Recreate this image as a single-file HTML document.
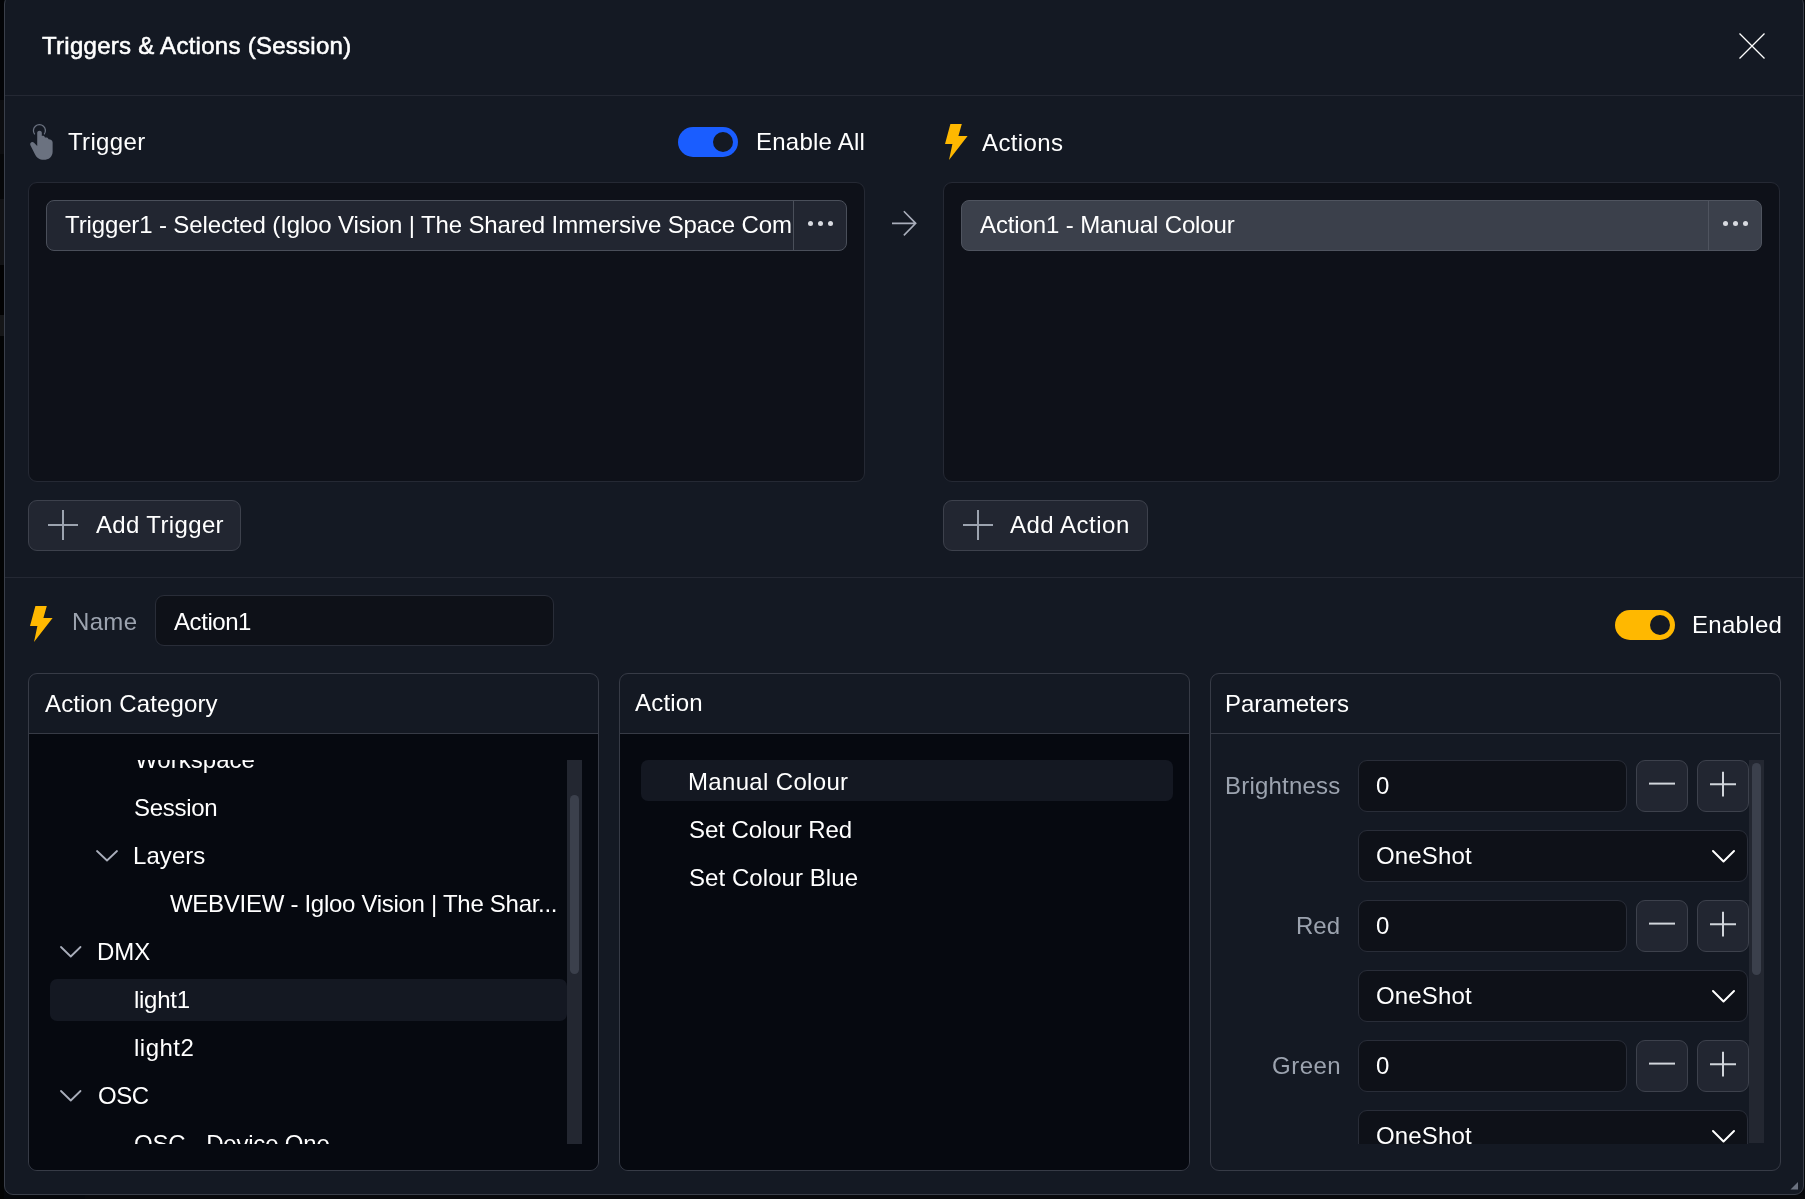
<!DOCTYPE html>
<html><head><meta charset="utf-8">
<style>
html,body{margin:0;padding:0;width:1805px;height:1199px;overflow:hidden;background:#05070b;}
*{box-sizing:border-box;}
body{font-family:"Liberation Sans",sans-serif;font-size:24px;color:#fff;position:relative;}
.abs{position:absolute;}
.t{position:absolute;line-height:28px;white-space:nowrap;will-change:transform;}
</style></head>
<body>
<div class="abs" style="left:0px;top:0px;width:4px;height:100px;background:#030407;"></div>
<div class="abs" style="left:0px;top:100px;width:4px;height:54px;background:#0c0d10;"></div>
<div class="abs" style="left:0px;top:154px;width:4px;height:45px;background:#060709;"></div>
<div class="abs" style="left:0px;top:199px;width:4px;height:66px;background:#111215;"></div>
<div class="abs" style="left:0px;top:265px;width:4px;height:50px;background:#020203;"></div>
<div class="abs" style="left:0px;top:315px;width:4px;height:21px;background:#151618;"></div>
<div class="abs" style="left:0px;top:336px;width:4px;height:863px;background:#030405;"></div>
<div class="abs" style="left:85px;top:1195px;width:1720px;height:4px;background:#08090c;"></div>
<div class="abs" style="left:4px;top:-5px;width:1800px;height:1200px;background:#141923;border:1px solid #3a3f4a;border-radius:9px"></div>
<div class="t" style="left:42px;top:32px;letter-spacing:0.27px;color:#fff;-webkit-text-stroke:0.55px #fff;">Triggers &amp; Actions (Session)</div>
<svg class="abs" style="left:1732px;top:26px" width="40" height="40" viewBox="0 0 40 40"><path d="M7.5 7.5 L32.5 32.5 M32.5 7.5 L7.5 32.5" stroke="#fff" stroke-width="1.25" fill="none"/></svg>
<div class="abs" style="left:5px;top:95px;width:1798px;height:1px;background:#242833;"></div>
<svg class="abs" style="left:24px;top:118px" width="36" height="48" viewBox="0 0 899 1199">
 <path d="M267 407 A150 150 0 1 1 503 407" stroke="#6b7280" stroke-width="32" fill="none"/>
 <path d="M330 700 L330 370 C330 300 445 300 445 370 L445 450 C475 440 510 450 520 483 L527 490 C555 480 598 488 610 522 L617 530 C650 528 715 545 715 610 L715 840 C715 960 620 1045 490 1045 C390 1045 310 990 270 900 L160 680 C130 620 210 570 250 620 L330 700 Z" fill="#6b7280"/>
</svg>
<div class="t" style="left:68px;top:128px;letter-spacing:0.333px;color:#fff;">Trigger</div>
<div class="abs" style="left:678px;top:127px;width:60px;height:30px;background:#1a5dff;border-radius:15px"></div>
<div class="abs" style="left:713px;top:132px;width:20px;height:20px;background:#141923;border-radius:50%"></div>
<div class="t" style="left:756px;top:128px;letter-spacing:0.233px;color:#fff;">Enable All</div>
<svg class="abs" style="left:945px;top:124px" width="23" height="36" viewBox="0 0 23 36"><path d="M5.4 0 L16.8 0 L13.4 12 L22.6 12 L4 36 L7.4 20 L0 20 Z" fill="#ffb800"/></svg>
<div class="t" style="left:982px;top:129px;letter-spacing:0.383px;color:#fff;">Actions</div>
<div class="abs" style="left:28px;top:182px;width:837px;height:300px;background:#0e1119;border:1px solid #252934;border-radius:9px"></div>
<div class="abs" style="left:46px;top:200px;width:801px;height:51px;background:#222631;border:1px solid #4a4f5a;border-radius:8px;overflow:hidden">
<div class="abs" style="left:0;top:0;width:746px;height:49px;overflow:hidden"><div class="t" style="left:18px;top:10px;letter-spacing:-0.13px;color:#fff;">Trigger1 - Selected (Igloo Vision | The Shared Immersive Space Company)</div>
</div>
<div class="abs" style="left:746px;top:0px;width:1px;height:49px;background:#4a4f5a;"></div>
<div class="abs" style="left:760.5px;top:19.5px;width:5px;height:5px;background:#d8dae0;border-radius:50%"></div>
<div class="abs" style="left:770.7px;top:19.5px;width:5px;height:5px;background:#d8dae0;border-radius:50%"></div>
<div class="abs" style="left:780.9px;top:19.5px;width:5px;height:5px;background:#d8dae0;border-radius:50%"></div>
</div>
<svg class="abs" style="left:884px;top:203px" width="40" height="40" viewBox="0 0 40 40"><path d="M8 20.35 L31.7 20.35 M19.85 8.3 L31.7 20.35 L19.85 32.4" stroke="#a9aebb" stroke-width="1.6" fill="none"/></svg>
<div class="abs" style="left:943px;top:182px;width:837px;height:300px;background:#0e1119;border:1px solid #252934;border-radius:9px"></div>
<div class="abs" style="left:961px;top:200px;width:801px;height:51px;background:#3b404b;border:1px solid #4f545f;border-radius:8px;overflow:hidden">
<div class="t" style="left:18px;top:10px;letter-spacing:-0.123px;color:#fff;">Action1 - Manual Colour</div>
<div class="abs" style="left:746px;top:0px;width:1px;height:49px;background:#4f545f;"></div>
<div class="abs" style="left:760.5px;top:19.5px;width:5px;height:5px;background:#d8dae0;border-radius:50%"></div>
<div class="abs" style="left:770.7px;top:19.5px;width:5px;height:5px;background:#d8dae0;border-radius:50%"></div>
<div class="abs" style="left:780.9px;top:19.5px;width:5px;height:5px;background:#d8dae0;border-radius:50%"></div>
</div>
<div class="abs" style="left:28px;top:500px;width:213px;height:51px;background:#222631;border:1px solid #3d414c;border-radius:9px"></div>
<svg class="abs" style="left:48px;top:510px" width="30" height="30" viewBox="0 0 30 30"><path d="M15.0 0 V30 M0 15.0 H30" stroke="#9ca3af" stroke-width="2" fill="none"/></svg>
<div class="t" style="left:96px;top:511px;letter-spacing:0.35px;color:#fff;">Add Trigger</div>
<div class="abs" style="left:943px;top:500px;width:205px;height:51px;background:#222631;border:1px solid #3d414c;border-radius:9px"></div>
<svg class="abs" style="left:963px;top:510px" width="30" height="30" viewBox="0 0 30 30"><path d="M15.0 0 V30 M0 15.0 H30" stroke="#9ca3af" stroke-width="2" fill="none"/></svg>
<div class="t" style="left:1010px;top:511px;letter-spacing:0.5px;color:#fff;">Add Action</div>
<div class="abs" style="left:5px;top:577px;width:1798px;height:1px;background:#242833;"></div>
<svg class="abs" style="left:30px;top:606px" width="23" height="36" viewBox="0 0 23 36"><path d="M5.4 0 L16.8 0 L13.4 12 L22.6 12 L4 36 L7.4 20 L0 20 Z" fill="#ffb800"/></svg>
<div class="t" style="left:72px;top:608px;letter-spacing:0.333px;color:#9ca3af;">Name</div>
<div class="abs" style="left:155px;top:595px;width:399px;height:51px;background:#0e1118;border:1px solid #292d38;border-radius:9px"></div>
<div class="t" style="left:174px;top:608px;letter-spacing:-0.433px;color:#fff;">Action1</div>
<div class="abs" style="left:1615px;top:610px;width:60px;height:30px;background:#ffb800;border-radius:15px"></div>
<div class="abs" style="left:1650px;top:615px;width:20px;height:20px;background:#141923;border-radius:50%"></div>
<div class="t" style="left:1692px;top:611px;letter-spacing:0.3px;color:#fff;">Enabled</div>
<div class="abs" style="left:28px;top:673px;width:571px;height:498px;background:#141923;border:1px solid #373b46;border-radius:9px;overflow:hidden">
<div class="abs" style="left:0px;top:59px;width:569px;height:1px;background:#373b46;"></div>
<div class="abs" style="left:0px;top:60px;width:569px;height:437px;background:#060910;"></div>
</div>
<div class="t" style="left:45px;top:690px;letter-spacing:0.129px;color:#fff;">Action Category</div>
<div class="abs" style="left:619px;top:673px;width:571px;height:498px;background:#141923;border:1px solid #373b46;border-radius:9px;overflow:hidden">
<div class="abs" style="left:0px;top:59px;width:569px;height:1px;background:#373b46;"></div>
<div class="abs" style="left:0px;top:60px;width:569px;height:437px;background:#060910;"></div>
</div>
<div class="t" style="left:635px;top:689px;letter-spacing:0.2px;color:#fff;">Action</div>
<div class="abs" style="left:1210px;top:673px;width:571px;height:498px;background:#141923;border:1px solid #373b46;border-radius:9px;overflow:hidden">
<div class="abs" style="left:0px;top:59px;width:569px;height:1px;background:#373b46;"></div>
</div>
<div class="t" style="left:1225px;top:690px;letter-spacing:0.0px;color:#fff;">Parameters</div>
<div class="abs" style="left:29px;top:760px;width:538px;height:384px;overflow:hidden">
<div class="abs" style="left:21px;top:219px;width:517px;height:42px;background:#141822;border-radius:7px"></div>
<div class="t" style="left:106px;top:-14px;letter-spacing:0.038px;color:#fff;">Workspace</div>
<div class="t" style="left:105px;top:34px;letter-spacing:-0.283px;color:#fff;">Session</div>
<div class="t" style="left:104px;top:82px;letter-spacing:0.06px;color:#fff;">Layers</div>
<div class="t" style="left:141px;top:130px;letter-spacing:-0.286px;color:#fff;">WEBVIEW - Igloo Vision | The Shar...</div>
<div class="t" style="left:68px;top:178px;letter-spacing:-0.0px;color:#fff;">DMX</div>
<div class="t" style="left:105px;top:226px;letter-spacing:-0.28px;color:#fff;">light1</div>
<div class="t" style="left:105px;top:274px;letter-spacing:0.5px;color:#fff;">light2</div>
<div class="t" style="left:69px;top:322px;letter-spacing:-0.5px;color:#fff;">OSC</div>
<div class="t" style="left:105px;top:370px;letter-spacing:-0.2px;color:#fff;">OSC - Device One</div>
<svg class="abs" style="left:66px;top:89.29999999999995px" width="24" height="13.5" viewBox="-2 -2 24 13.5"><path d="M0 0 L10.0 9.5 L20 0" stroke="#a9aebb" stroke-width="1.8" fill="none" stroke-linecap="round" stroke-linejoin="round"/></svg>
<svg class="abs" style="left:30.299999999999997px;top:185.29999999999995px" width="23.5" height="13.5" viewBox="-2 -2 23.5 13.5"><path d="M0 0 L9.75 9.5 L19.5 0" stroke="#a9aebb" stroke-width="1.8" fill="none" stroke-linecap="round" stroke-linejoin="round"/></svg>
<svg class="abs" style="left:30.299999999999997px;top:329px" width="23.5" height="13.5" viewBox="-2 -2 23.5 13.5"><path d="M0 0 L9.75 9.5 L19.5 0" stroke="#a9aebb" stroke-width="1.8" fill="none" stroke-linecap="round" stroke-linejoin="round"/></svg>
</div>
<div class="abs" style="left:567px;top:760px;width:15px;height:384px;background:#232731;"></div>
<div class="abs" style="left:570px;top:795px;width:9px;height:179px;background:#3b404c;border-radius:5px"></div>
<div class="abs" style="left:641px;top:760px;width:532px;height:41px;background:#141822;border-radius:7px"></div>
<div class="t" style="left:688px;top:768px;letter-spacing:0.333px;color:#fff;">Manual Colour</div>
<div class="t" style="left:689px;top:816px;letter-spacing:-0.077px;color:#fff;">Set Colour Red</div>
<div class="t" style="left:689px;top:864px;letter-spacing:0.064px;color:#fff;">Set Colour Blue</div>
<div class="abs" style="left:1211px;top:760px;width:538px;height:384px;overflow:hidden">
<div class="t" style="left:14px;top:12px;letter-spacing:0.2px;color:#9ca3af">Brightness</div>
<div class="abs" style="left:147px;top:0px;width:269px;height:52px;background:#0e1118;border:1px solid #292d38;border-radius:9px"></div>
<div class="t" style="left:165px;top:12px">0</div>
<div class="abs" style="left:425px;top:0px;width:52px;height:52px;background:#222631;border:1px solid #3d414c;border-radius:9px"></div>
<svg class="abs" style="left:438px;top:11px" width="26" height="26" viewBox="0 0 26 26"><path d="M0 12.6 H26" stroke="#d1d5db" stroke-width="2" fill="none"/></svg>
<div class="abs" style="left:486px;top:0px;width:52px;height:52px;background:#222631;border:1px solid #3d414c;border-radius:9px"></div>
<svg class="abs" style="left:499px;top:11px" width="26" height="26" viewBox="0 0 26 26"><path d="M0 13.2 H26 M13 0.8 V25.6" stroke="#d1d5db" stroke-width="2" fill="none"/></svg>
<div class="abs" style="left:147px;top:70px;width:390px;height:52px;background:#0e1118;border:1px solid #292d38;border-radius:9px"></div>
<div class="t" style="left:165px;top:82px;letter-spacing:0.167px">OneShot</div>
<svg class="abs" style="left:499.5px;top:88.5px" width="25" height="14.5" viewBox="-2 -2 25 14.5"><path d="M0 0 L10.5 10.5 L21 0" stroke="#fff" stroke-width="2" fill="none" stroke-linecap="round" stroke-linejoin="round"/></svg>
<div class="t" style="left:85px;top:152px;letter-spacing:0.0px;color:#9ca3af">Red</div>
<div class="abs" style="left:147px;top:140px;width:269px;height:52px;background:#0e1118;border:1px solid #292d38;border-radius:9px"></div>
<div class="t" style="left:165px;top:152px">0</div>
<div class="abs" style="left:425px;top:140px;width:52px;height:52px;background:#222631;border:1px solid #3d414c;border-radius:9px"></div>
<svg class="abs" style="left:438px;top:151px" width="26" height="26" viewBox="0 0 26 26"><path d="M0 12.6 H26" stroke="#d1d5db" stroke-width="2" fill="none"/></svg>
<div class="abs" style="left:486px;top:140px;width:52px;height:52px;background:#222631;border:1px solid #3d414c;border-radius:9px"></div>
<svg class="abs" style="left:499px;top:151px" width="26" height="26" viewBox="0 0 26 26"><path d="M0 13.2 H26 M13 0.8 V25.6" stroke="#d1d5db" stroke-width="2" fill="none"/></svg>
<div class="abs" style="left:147px;top:210px;width:390px;height:52px;background:#0e1118;border:1px solid #292d38;border-radius:9px"></div>
<div class="t" style="left:165px;top:222px;letter-spacing:0.167px">OneShot</div>
<svg class="abs" style="left:499.5px;top:228.5px" width="25" height="14.5" viewBox="-2 -2 25 14.5"><path d="M0 0 L10.5 10.5 L21 0" stroke="#fff" stroke-width="2" fill="none" stroke-linecap="round" stroke-linejoin="round"/></svg>
<div class="t" style="left:61px;top:292px;letter-spacing:0.5px;color:#9ca3af">Green</div>
<div class="abs" style="left:147px;top:280px;width:269px;height:52px;background:#0e1118;border:1px solid #292d38;border-radius:9px"></div>
<div class="t" style="left:165px;top:292px">0</div>
<div class="abs" style="left:425px;top:280px;width:52px;height:52px;background:#222631;border:1px solid #3d414c;border-radius:9px"></div>
<svg class="abs" style="left:438px;top:291px" width="26" height="26" viewBox="0 0 26 26"><path d="M0 12.6 H26" stroke="#d1d5db" stroke-width="2" fill="none"/></svg>
<div class="abs" style="left:486px;top:280px;width:52px;height:52px;background:#222631;border:1px solid #3d414c;border-radius:9px"></div>
<svg class="abs" style="left:499px;top:291px" width="26" height="26" viewBox="0 0 26 26"><path d="M0 13.2 H26 M13 0.8 V25.6" stroke="#d1d5db" stroke-width="2" fill="none"/></svg>
<div class="abs" style="left:147px;top:350px;width:390px;height:52px;background:#0e1118;border:1px solid #292d38;border-radius:9px"></div>
<div class="t" style="left:165px;top:362px;letter-spacing:0.167px">OneShot</div>
<svg class="abs" style="left:499.5px;top:368.5px" width="25" height="14.5" viewBox="-2 -2 25 14.5"><path d="M0 0 L10.5 10.5 L21 0" stroke="#fff" stroke-width="2" fill="none" stroke-linecap="round" stroke-linejoin="round"/></svg>
</div>
<div class="abs" style="left:1749px;top:760px;width:15px;height:383px;background:#232731;"></div>
<div class="abs" style="left:1752px;top:763px;width:9px;height:212px;background:#3b404c;border-radius:5px"></div>
<svg class="abs" style="left:1788px;top:1180px" width="12" height="12" viewBox="0 0 12 12"><path d="M10 2 L10 9.5 L2.5 9.5 Z" fill="#6b7280"/></svg>
</body></html>
